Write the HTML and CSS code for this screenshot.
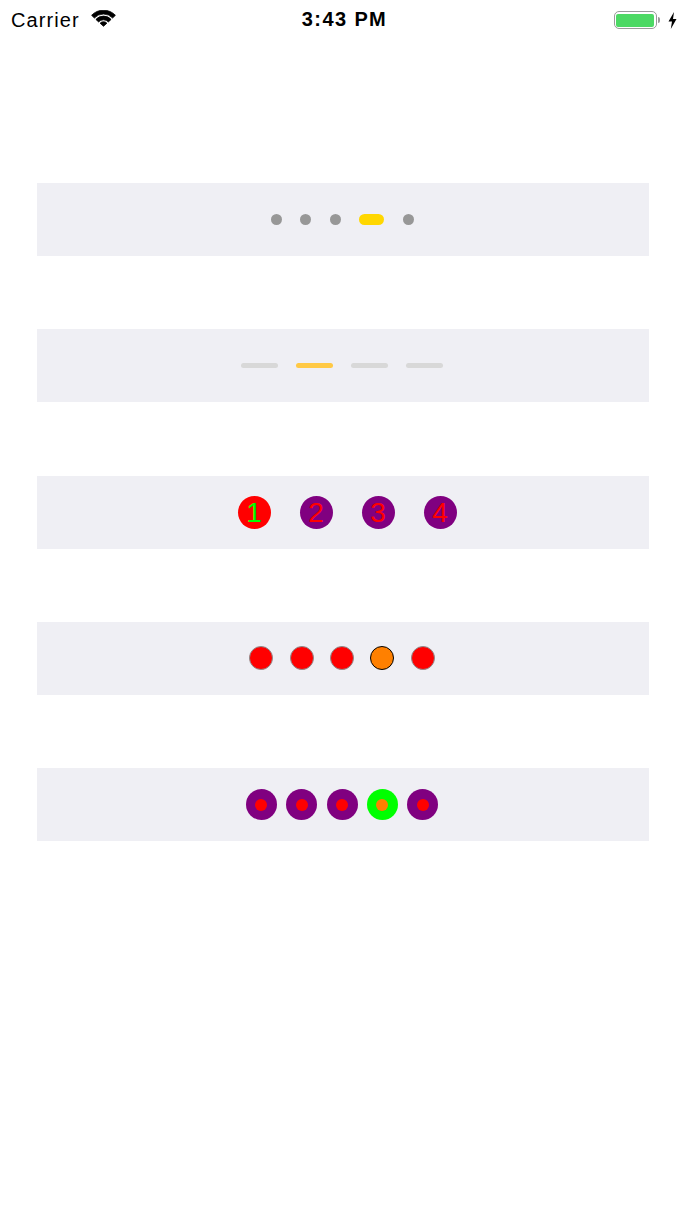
FILE: index.html
```html
<!DOCTYPE html>
<html>
<head>
<meta charset="utf-8">
<link rel="stylesheet" href="styles.css">
</head>
<body>
<div class="statusbar">
  <div class="sb-left">
    <span class="carrier">Carrier</span>
    <svg class="wifi" width="25" height="17" viewBox="0 0 25 17">
      <g fill="#000" stroke="#000" stroke-width="0.8" stroke-linejoin="round">
        <path d="M0.6 5.3A16.3 16.3 0 0 1 24.4 5.3L21.6 8A12.4 12.4 0 0 0 3.4 8Z"/>
        <path d="M4.9 9.4A10.4 10.4 0 0 1 20.1 9.4L17.4 11.9A6.8 6.8 0 0 0 7.6 11.9Z"/>
        <path d="M12.5 16.3L9.1 13.2A4.7 4.7 0 0 1 15.9 13.2Z"/>
      </g>
    </svg>
  </div>
  <div class="time">3:43 PM</div>
  <div class="sb-right">
    <div class="battery"><div class="battery-fill"></div></div>
    <div class="battery-nub"></div>
    <svg class="bolt" width="9" height="17" viewBox="0 0 9 17">
      <path d="M6 0L0.5 9.5h3.5L2.8 17 8.5 7H5z" fill="#000"/>
    </svg>
  </div>
</div>

<main class="content">
  <section class="panel">
    <div class="row row-dots">
      <span class="dot"></span>
      <span class="dot"></span>
      <span class="dot"></span>
      <span class="pill"></span>
      <span class="dot"></span>
    </div>
  </section>

  <section class="panel">
    <div class="row row-bars">
      <span class="bar"></span>
      <span class="bar bar-active"></span>
      <span class="bar"></span>
      <span class="bar"></span>
    </div>
  </section>

  <section class="panel panel-shift">
    <div class="row row-numbers">
      <span class="num num-active">1</span>
      <span class="num">2</span>
      <span class="num">3</span>
      <span class="num">4</span>
    </div>
  </section>

  <section class="panel">
    <div class="row row-bordered">
      <span class="bdot"></span>
      <span class="bdot"></span>
      <span class="bdot"></span>
      <span class="bdot bdot-active"></span>
      <span class="bdot"></span>
    </div>
  </section>

  <section class="panel">
    <div class="row row-rings">
      <span class="ring"><span class="core"></span></span>
      <span class="ring"><span class="core"></span></span>
      <span class="ring"><span class="core"></span></span>
      <span class="ring ring-active"><span class="core"></span></span>
      <span class="ring"><span class="core"></span></span>
    </div>
  </section>
</main>
</body>
</html>
```

FILE: styles.css
```css
html, body {
  margin: 0;
  padding: 0;
  background: #ffffff;
  font-family: "Liberation Sans", Arial, sans-serif;
}

.statusbar {
  height: 40px;
  display: flex;
  align-items: center;
  justify-content: space-between;
  position: relative;
  padding: 0 9px 0 11px;
  box-sizing: border-box;
}

.sb-left {
  display: flex;
  align-items: center;
  gap: 11px;
}

.carrier {
  font-size: 20px;
  letter-spacing: 1.1px;
  color: #000;
  line-height: 1;
}

.wifi {
  display: block;
  margin-top: -3px;
}

.time {
  position: absolute;
  left: 0;
  right: 0;
  top: 0;
  height: 40px;
  line-height: 39px;
  text-align: center;
  font-size: 20px;
  font-weight: bold;
  letter-spacing: 1.4px;
  padding-left: 3px;
  color: #000;
  pointer-events: none;
}

.sb-right {
  display: flex;
  align-items: center;
}

.battery {
  width: 43px;
  height: 18px;
  box-sizing: border-box;
  border: 1.5px solid #9a9a9a;
  border-radius: 5px;
  padding: 1.5px;
}

.battery-fill {
  width: 100%;
  height: 100%;
  background: #4cd964;
  border-radius: 2px;
}

.battery-nub {
  width: 2.5px;
  height: 6px;
  background: #9a9a9a;
  border-radius: 0 2px 2px 0;
  margin-left: 1px;
}

.bolt {
  display: block;
  margin-left: 8px;
}

.content {
  display: flex;
  flex-direction: column;
  gap: 73.25px;
  padding: 143px 37px 0 37px;
}

.panel {
  height: 73px;
  background: #efeff4;
  display: flex;
  align-items: center;
  justify-content: center;
}

.panel-shift {
  padding-left: 8px;
}

.row {
  display: flex;
  align-items: center;
}

/* row 1 */
.row-dots {
  gap: 18.5px;
  margin-left: -2px;
}

.dot {
  width: 11px;
  height: 11px;
  border-radius: 50%;
  background: #979797;
}

.pill {
  width: 25px;
  height: 11px;
  border-radius: 6px;
  background: #ffd700;
}

/* row 2 */
.row-bars {
  gap: 18px;
  margin-left: -2px;
}

.bar {
  width: 37px;
  height: 5px;
  border-radius: 3px;
  background: #d8d8d8;
}

.bar-active {
  background: #ffc945;
}

/* row 3 */
.row-numbers {
  gap: 29px;
}

.num {
  width: 33px;
  height: 33px;
  border-radius: 50%;
  background: #800080;
  color: #ff0000;
  font-size: 28px;
  line-height: 33px;
  text-align: center;
}

.num-active {
  background: #ff0000;
  color: #00ff00;
}

/* row 4 */
.row-bordered {
  gap: 16.3px;
  margin-left: -2px;
}

.bdot {
  width: 24px;
  height: 24px;
  box-sizing: border-box;
  border-radius: 50%;
  background: #ff0000;
  border: 1.5px solid #8c8c8c;
}

.bdot-active {
  background: #ff8000;
  border-color: #000;
}

/* row 5 */
.row-rings {
  gap: 9.3px;
  margin-left: -2px;
}

.ring {
  width: 31px;
  height: 31px;
  border-radius: 50%;
  background: #800080;
  display: flex;
  align-items: center;
  justify-content: center;
}

.core {
  width: 12px;
  height: 12px;
  border-radius: 50%;
  background: #ff0000;
}

.ring-active {
  background: #00ff00;
}

.ring-active .core {
  background: #ff8000;
}
```
